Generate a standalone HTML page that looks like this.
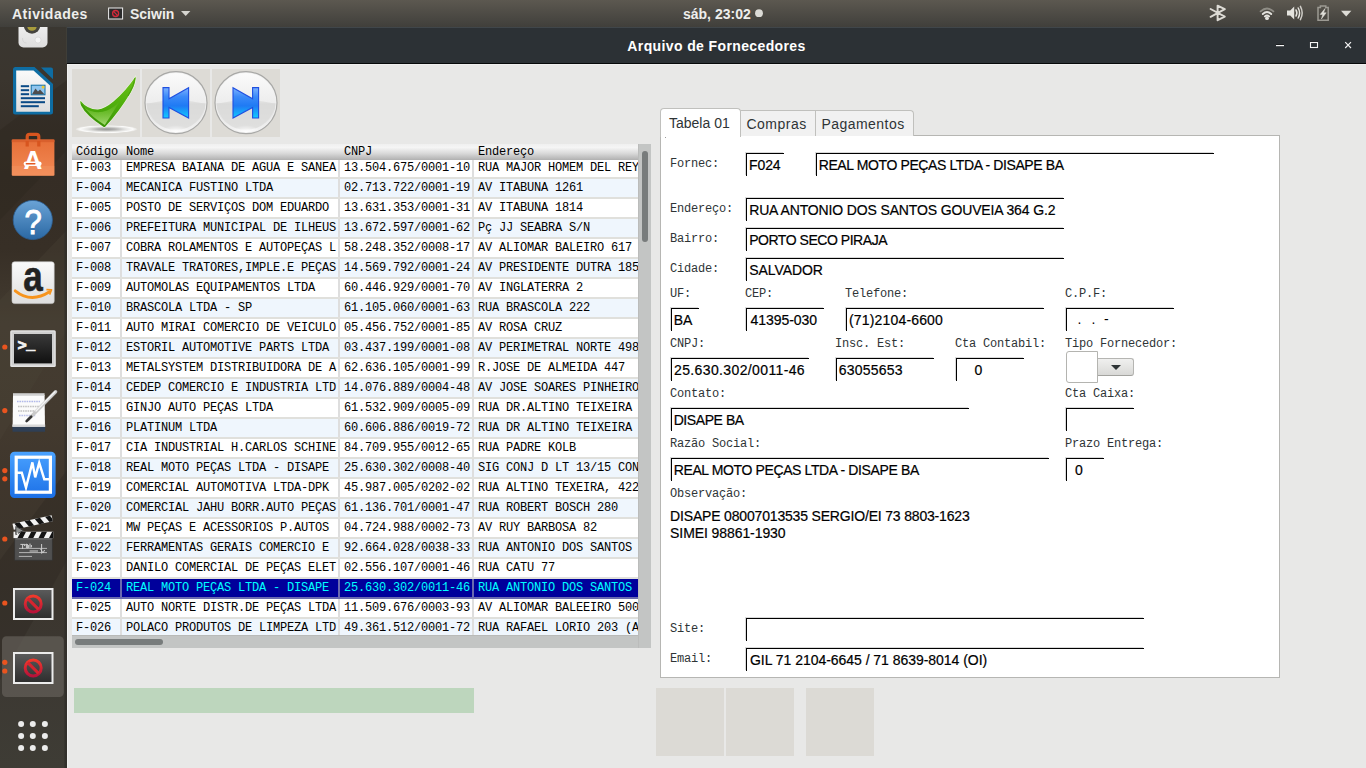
<!DOCTYPE html>
<html lang="pt-BR"><head><meta charset="utf-8"><title>Arquivo de Fornecedores</title>
<style>
*{box-sizing:border-box;margin:0;padding:0}
html,body{width:1366px;height:768px;overflow:hidden;background:#e8e8e7}
body{position:relative;font-family:"Liberation Sans",sans-serif;color:#000}
.abs{position:absolute}
/* top bar */
#topbar{position:absolute;left:0;top:0;width:1366px;height:27px;background:linear-gradient(#5c5850,#403f3b);color:#eeeeec;font-family:"Liberation Sans",sans-serif;font-weight:bold;font-size:14px}
#topbar .t{position:absolute;top:1px;line-height:27px;white-space:nowrap}
/* dock */
#dock{position:absolute;left:0;top:27px;width:67px;height:741px;background:#393630;overflow:hidden}
/* window */
#titlebar{position:absolute;left:67px;top:27px;width:1299px;height:36px;background:#2c3135;border-top:1px solid #40464a;color:#fff}
#titlebar .title{position:absolute;left:0;width:100%;top:1px;text-align:center;line-height:35px;font-weight:bold;font-size:14px;letter-spacing:.38px}
#tbline{position:absolute;left:67px;top:63px;width:1299px;height:1px;background:#07090a}
#winleft{position:absolute;left:67px;top:64px;width:1px;height:704px;background:#f1f1f0}
#wintop{position:absolute;left:67px;top:64px;width:1299px;height:1px;background:#f0f0ef}
#content{position:absolute;left:67px;top:64px;width:1299px;height:704px;background:#e8e8e7}
/* toolbar buttons */
.tb{position:absolute;top:69px;width:68px;height:68px;background:#dddbd6}
/* table */
#grid{position:absolute;left:72px;top:144px;width:579px;height:504px;background:#c3c5c4;overflow:hidden;font-family:"Liberation Mono",monospace;font-size:12px;letter-spacing:-0.2px;color:#000}
#ghead{position:absolute;left:0;top:0;width:566px;height:16px;background:linear-gradient(#f0f0f0,#f5f5f5 22%,#d8d8d8 60%,#b0b0b0);white-space:nowrap;z-index:2}
#ghead span{position:absolute;top:1px;line-height:15px}
#gbody{position:absolute;left:0;top:15px;width:566px;height:476px;border-bottom:1px solid #b9bab8;box-sizing:content-box;overflow:hidden;background:#fff}
.tr{position:relative;height:20px;border-bottom:2px solid #e0e0dc;background:#fff;white-space:nowrap;overflow:hidden}
.tr.alt{background:#eff6fd}
.tr.sel{background:#00009b;color:#00ffff;border-bottom-color:#6a6ab0}
.tr span{position:absolute;top:0;height:18px;line-height:19px;padding-left:4px;overflow:hidden;border-right:2px solid #dedede}
.tr.sel span{border-right-color:#6a6ab0}
.c1{left:0;width:50px}.c2{left:50px;width:218px}.c3{left:268px;width:134px}.c4{left:402px;width:164px;border-right:none !important}
#vtrack{position:absolute;left:566px;top:0;width:13px;height:504px;background:#c3c5c4;border-left:1px solid #bbbcbb}
#vthumb{position:absolute;left:570px;top:7px;width:6px;height:91px;border-radius:3px;background:#787c7c}
#hthumb{position:absolute;left:3px;top:495px;width:88px;height:6px;border-radius:3px;background:#787c7c}
/* green bar */
#green{position:absolute;left:74px;top:688px;width:400px;height:25px;background:#bdd6bd}
.gb{position:absolute;top:688px;width:68px;height:68px;background:#dcdad5}
/* notebook */
#panel{position:absolute;left:660px;top:135px;width:620px;height:543px;background:#fff;border:1px solid #b6b6b3}
.tab{position:absolute;font-size:14px;color:#2e3436;white-space:nowrap;background:#f1f1f1;border:1px solid #c0c0bd;border-bottom:none}
.tab span{position:absolute;white-space:nowrap}
/* form */
.lb{position:absolute;font-family:"Liberation Mono",monospace;font-size:12px;letter-spacing:-0.2px;color:#2e3436;white-space:nowrap;line-height:14px}
.in{position:absolute;height:23px;border-top:1px solid #000;border-left:1px solid #000;font-size:14px;white-space:nowrap;color:#000;box-shadow:-1px -1px 0 #d9d9d9}
.in span{position:absolute;top:3px;line-height:17px;white-space:nowrap;-webkit-text-stroke:.2px #000}
.obs{position:absolute;font-size:14px;line-height:17px;white-space:nowrap;color:#000;-webkit-text-stroke:.2px #000}

</style></head>
<body>
<div id="topbar">
 <span class="t" style="left:12px;letter-spacing:.5px">Atividades</span>
 <span class="t" style="left:130px">Sciwin</span>
 <span class="t" style="left:683px">sáb, 23:02</span>
</div>
<svg id="docksvg" class="abs" style="left:0;top:27px" width="67" height="741" viewBox="0 27 67 741">
<defs>
 <linearGradient id="dbg" x1="0" y1="0" x2="0" y2="1"><stop offset="0" stop-color="#3a3731"/><stop offset=".07" stop-color="#3a352e"/><stop offset=".2" stop-color="#352d25"/><stop offset=".3" stop-color="#372f26"/><stop offset=".4" stop-color="#443c31"/><stop offset=".52" stop-color="#433a2f"/><stop offset=".62" stop-color="#3f362c"/><stop offset=".75" stop-color="#3b352d"/><stop offset=".86" stop-color="#3c3832"/><stop offset="1" stop-color="#3e3c35"/></linearGradient>
 <linearGradient id="gWhite" x1="0" y1="0" x2="0" y2="1"><stop offset="0" stop-color="#fafafa"/><stop offset="1" stop-color="#dedede"/></linearGradient>
 <linearGradient id="gBag" x1="0" y1="0" x2="0" y2="1"><stop offset="0" stop-color="#e66f38"/><stop offset="1" stop-color="#f28a55"/></linearGradient>
 <linearGradient id="gHelp" x1="0" y1="0" x2="0" y2="1"><stop offset="0" stop-color="#6aa3d6"/><stop offset="1" stop-color="#2a68a3"/></linearGradient>
 <linearGradient id="gTerm" x1="0" y1="0" x2="0" y2="1"><stop offset="0" stop-color="#3a3a3a"/><stop offset="1" stop-color="#101010"/></linearGradient>
 <linearGradient id="gMon" x1="0" y1="0" x2="0" y2="1"><stop offset="0" stop-color="#4aa2ff"/><stop offset="1" stop-color="#1b6fe6"/></linearGradient>
 <linearGradient id="gScr" x1="0" y1="0" x2="0" y2="1"><stop offset="0" stop-color="#5a5a5a"/><stop offset="1" stop-color="#2e2e2e"/></linearGradient>
 <linearGradient id="gBan" x1="0" y1="0" x2="0" y2="1"><stop offset="0" stop-color="#f0392b"/><stop offset="1" stop-color="#b8123a"/></linearGradient>
 <g id="ban">
  <rect x="13" y="0" width="40.5" height="32" fill="#ececec"/>
  <rect x="15" y="2" width="36.5" height="28" fill="url(#gScr)"/>
  <circle cx="33.2" cy="16" r="8" fill="none" stroke="url(#gBan)" stroke-width="3"/>
  <line x1="27.8" y1="10.6" x2="38.6" y2="21.4" stroke="#d6242f" stroke-width="3"/>
 </g>
</defs>
<rect x="0" y="27" width="67" height="741" fill="url(#dbg)"/>
<path d="M0 300 L67 230 L67 330 L0 440 Z" fill="#4d4437" opacity=".3"/>
<path d="M0 130 L67 80 L67 150 L0 220 Z" fill="#2c241c" opacity=".35"/>
<path d="M0 560 L67 470 L67 560 L0 680 Z" fill="#2c261f" opacity=".35"/>
<rect x="66" y="27" width="1" height="36" fill="#3f3e38"/>
<rect x="64" y="120" width="1" height="648" fill="#2c2b27" opacity=".35"/>
<rect x="65" y="120" width="2" height="648" fill="#2b2a27" opacity=".6"/>

<!-- rhythmbox partial -->
<rect x="18.5" y="10" width="29" height="37.5" rx="5" fill="url(#gWhite)"/>
<circle cx="32" cy="25.5" r="8.2" fill="#45443f"/>
<circle cx="32" cy="26" r="4.8" fill="#a89c3c"/>
<circle cx="38" cy="40" r="3" fill="#f4f4f4" stroke="#d4d4d4" stroke-width=".6"/>
<path d="M22.5 38 Q22.5 43 26.5 43" fill="none" stroke="#d6d6d6" stroke-width="1"/>

<!-- writer -->
<g transform="translate(13,67)">
 <path d="M2.5 0 H21.5 L40 17 V45 Q40 47.5 37.5 47.5 H2.5 Q0 47.5 0 45 V2.5 Q0 0 2.5 0Z" fill="#0e6da3"/>
 <path d="M3.2 3.5 H20.5 L37 18.5 V44.8 H3.2Z" fill="url(#gWhite)"/>
 <path d="M28 .4 H38 Q40 .4 40 2.4 V12.2Z" fill="#0e6da3"/>
 <g fill="#0a4a86">
  <rect x="7.8" y="18.2" width="8.3" height="2"/><rect x="7.8" y="22.2" width="8.3" height="2"/><rect x="7.8" y="26.2" width="8.3" height="2"/>
  <rect x="7.8" y="30.2" width="24.2" height="2"/><rect x="7.8" y="34.2" width="24.2" height="2"/><rect x="7.8" y="38.2" width="18" height="2"/>
 </g>
 <rect x="18.2" y="18.2" width="13.8" height="9.6" fill="#8fc5ee" stroke="#0e6da3" stroke-width="1"/>
 <path d="M19 27.3 L22.5 21.5 L25 24.5 L27 22.5 L31.4 27.3Z" fill="#4d4d4d"/>
 <rect x="28.8" y="18.8" width="2.6" height="2.6" fill="#f1c92f"/>
</g>

<!-- software bag -->
<g>
 <path d="M27.2 141 V136.8 Q27.2 134.4 29.6 134.4 H36.4 Q38.8 134.4 38.8 136.8 V141" fill="none" stroke="#d8551f" stroke-width="3.2"/>
 <rect x="11.8" y="139.6" width="42.6" height="36.2" rx="1.2" fill="url(#gBag)"/>
 <rect x="11.8" y="139.6" width="42.6" height="2.6" fill="#d9602d"/>
 <rect x="11.8" y="166" width="42.6" height="9.8" fill="#f49a6a" opacity=".35"/>
 <path d="M27.2 141 V146.4 M38.8 141 V146.4" stroke="#d8551f" stroke-width="3.2"/>
 <text x="33" y="169" text-anchor="middle" font-family="Liberation Sans, sans-serif" font-weight="bold" font-size="26" fill="#fff">A</text>
 <rect x="23.6" y="161.4" width="18" height="4.6" rx="2.3" fill="#fff"/>
 <rect x="25.6" y="162.9" width="10" height="1.6" rx=".8" fill="#e35a22"/>
</g>

<!-- help -->
<circle cx="32.8" cy="220" r="19.6" fill="url(#gHelp)" stroke="#2c5f94" stroke-width=".8"/>
<text transform="translate(33.2 234.2) scale(.9 1)" x="0" y="0" text-anchor="middle" font-family="Liberation Sans, sans-serif" font-size="34.5" fill="#fff" stroke="#fff" stroke-width=".9">?</text>

<!-- amazon -->
<rect x="12" y="261.8" width="42.2" height="41.8" rx="2.5" fill="url(#gWhite)" stroke="#c9c9c9" stroke-width=".6"/>
<text transform="translate(32.9 290.8) scale(1 1.24)" x="0" y="0" text-anchor="middle" font-family="Liberation Sans, sans-serif" font-weight="bold" font-size="35" fill="#222" stroke="#222" stroke-width=".5">a</text>
<path d="M15.2 290.8 Q31 303.6 49.6 291.8" fill="none" stroke="#f7941d" stroke-width="2.9" stroke-linecap="round"/>
<path d="M46.4 289.6 L51.6 289.8 L49.6 294.6" fill="none" stroke="#f7941d" stroke-width="1.6" stroke-linejoin="round"/>

<!-- terminal -->
<rect x="10.2" y="330.2" width="45.6" height="36.7" rx="1.5" fill="#e4e4e4"/>
<rect x="11.6" y="331.6" width="42.8" height="33.9" fill="#cfcfcf"/>
<rect x="14" y="334" width="38" height="29.4" fill="url(#gTerm)"/>
<text x="17.4" y="350" font-family="Liberation Mono, monospace" font-weight="bold" font-size="15.5" fill="#f2f2f2" stroke="#f2f2f2" stroke-width=".8">&gt;<tspan dy="-.8" dx="-.4" font-size="15">_</tspan></text>

<!-- gedit -->
<g>
 <path d="M13 395 H44.6 L45 427 H12.6Z" fill="#fbfbfb"/>
 <path d="M12.4 426.5 H45.2 L45 431.8 H12.6Z" fill="#2f3f55"/>
 <rect x="12.4" y="424.5" width="32.8" height="2.4" fill="#d8d8d8"/>
 <rect x="13" y="393.2" width="31.6" height="2.6" fill="#d0d0d0"/>
 <g stroke-width="1.3" opacity=".5" stroke-dasharray="1.6 .8">
  <path d="M17 401.5 H40" stroke="#6a78d8"/><path d="M18 406.5 H41" stroke="#888"/><path d="M18 411 H38" stroke="#888"/><path d="M19 415.5 H36" stroke="#7a86dd"/>
 </g>
 <path d="M55.6 391.8 L28.4 419.4" stroke="#c9c9c9" stroke-width="3.4" stroke-linecap="round"/>
 <path d="M55 391.8 L36 411" stroke="#f4f4f4" stroke-width="1.4" stroke-linecap="round"/>
 <path d="M31.2 416.6 L26.6 421.2" stroke="#333" stroke-width="2.6" stroke-linecap="round"/>
</g>

<!-- system monitor -->
<rect x="10" y="451.8" width="45.6" height="46.2" rx="4.5" fill="url(#gMon)"/>
<rect x="16.2" y="457.2" width="34.2" height="35" fill="none" stroke="#fff" stroke-width="3.2"/>
<path d="M16.6 472.8 H21.8 L26 487.6 L32.4 462.4 L35.2 477.4 L39.2 462.8 L44.3 479.2 H50" fill="none" stroke="#fff" stroke-width="2.4" stroke-linejoin="miter"/>

<!-- clapper -->
<g>
 <rect x="14.7" y="538" width="37.6" height="22.2" fill="#505050" stroke="#333" stroke-width=".7"/>
 <rect x="15.4" y="538.6" width="36.2" height=".9" fill="#6c6c6c"/>
 <rect x="13.5" y="531.7" width="39.8" height="6.4" fill="#f2f2f2"/>
 <g fill="#141414"><path d="M17.5 538.1 L20.7 531.7 H26 L22.8 538.1Z"/><path d="M28 538.1 L31.2 531.7 H36.5 L33.3 538.1Z"/><path d="M38.5 538.1 L41.7 531.7 H47 L43.8 538.1Z"/><path d="M49 538.1 L52.2 531.7 H53.3 V538.1Z"/></g>
 <g transform="rotate(-12.2 13.6 527)">
  <rect x="13.2" y="523.6" width="40" height="6.2" fill="#f2f2f2"/>
  <g fill="#141414"><path d="M15 523.6 L18.2 529.8 H23.5 L20.3 523.6Z"/><path d="M25.5 523.6 L28.7 529.8 H34 L30.8 523.6Z"/><path d="M36 523.6 L39.2 529.8 H44.5 L41.3 523.6Z"/><path d="M46.5 523.6 L49.7 529.8 H53.2 V527 L51.6 523.6Z"/></g>
 </g>
 <path d="M15.8 526.4 L23.4 530.5 L15.8 534.6Z" fill="#8d8f8e" stroke="#3a3a3a" stroke-width=".9" stroke-linejoin="round"/>
 <circle cx="17.4" cy="533.2" r=".8" fill="#eee"/>
 <g stroke="#ededed" stroke-width=".8" opacity=".8" fill="none"><path d="M19 548.4 H47 M19 552.6 H47 M18.8 556.4 H32"/><path d="M20.4 544.4 H25 M22.6 544.4 V549 M24 546 L26.4 544 V548 M27.4 544 V548.4 M28.6 545 V548 M30 543.6 V547.8 M31.4 545 V547.4" stroke-width="1"/><path d="M41.6 544 V553.6 M40.6 549 L43 553 L44.6 550 M29.6 551 H38" stroke-width="1"/></g>
</g>

<!-- sciwin icons -->
<use href="#ban" y="588"/>
<rect x="2" y="636.3" width="61.8" height="60.8" rx="4.5" fill="#6a665f" opacity=".62"/>
<use href="#ban" y="652"/>

<!-- indicators -->
<g fill="#e9541f">
 <circle cx="4.8" cy="347" r="2.6"/><circle cx="4.8" cy="410.6" r="2.6"/>
 <circle cx="4.8" cy="470.6" r="2.6"/><circle cx="4.8" cy="478.8" r="2.6"/>
 <circle cx="4.8" cy="539" r="2.6"/><circle cx="4.8" cy="603" r="2.6"/>
 <circle cx="4.8" cy="662.3" r="2.6"/><circle cx="4.8" cy="671" r="2.6"/>
</g>
<!-- apps grid -->
<g fill="#ececec">
 <circle cx="21.1" cy="724" r="3"/><circle cx="32.8" cy="724" r="3"/><circle cx="44.9" cy="724" r="3"/>
 <circle cx="21.1" cy="736" r="3"/><circle cx="32.8" cy="736" r="3"/><circle cx="44.9" cy="736" r="3"/>
 <circle cx="21.1" cy="748" r="3"/><circle cx="32.8" cy="748" r="3"/><circle cx="44.9" cy="748" r="3"/>
</g>
</svg>

<div id="titlebar"><div class="title">Arquivo de Fornecedores</div></div>
<div id="tbline"></div>
<div id="content"></div>
<div id="winleft"></div><div id="wintop"></div>

<div class="tb" style="left:72px"></div>
<div class="tb" style="left:142px"></div>
<div class="tb" style="left:212px"></div>

<svg class="abs" style="left:72px;top:69px" width="208" height="68" viewBox="72 69 208 68">
<defs>
 <linearGradient id="gChk" x1="0" y1="0" x2="0" y2="1"><stop offset="0" stop-color="#6cc417"/><stop offset=".55" stop-color="#4fae0c"/><stop offset="1" stop-color="#3c9608"/></linearGradient>
 <linearGradient id="gChk2" x1="0" y1="0" x2="0" y2="1"><stop offset="0" stop-color="#9be04a" stop-opacity=".0"/><stop offset="1" stop-color="#c9f29a" stop-opacity=".9"/></linearGradient>
 <radialGradient id="gSh" cx=".5" cy=".5" r=".5"><stop offset="0" stop-color="#979796"/><stop offset=".3" stop-color="#b4b4b2"/><stop offset=".6" stop-color="#e2e2e0"/><stop offset=".85" stop-color="#fbfbfa"/><stop offset="1" stop-color="#fff" stop-opacity=".2"/></radialGradient>
 <linearGradient id="gBtn" x1="0" y1="0" x2="0" y2="1"><stop offset="0" stop-color="#fbfbfb"/><stop offset=".5" stop-color="#ededed"/><stop offset=".52" stop-color="#dcdcdc"/><stop offset="1" stop-color="#f3f3f3"/></linearGradient>
 <radialGradient id="gGlow" cx=".5" cy="1" r=".5"><stop offset="0" stop-color="#fff"/><stop offset="1" stop-color="#fff" stop-opacity="0"/></radialGradient>
 <linearGradient id="gBlue" x1="0" y1="0" x2="0" y2="1"><stop offset="0" stop-color="#7db2ff"/><stop offset=".3" stop-color="#3b8af8"/><stop offset=".6" stop-color="#1f7af4"/><stop offset="1" stop-color="#10ccff"/></linearGradient>
 <g id="rbtn">
  <circle cx="0" cy="0" r="31" fill="#f0f0f0" stroke="#a8a8a6" stroke-width="1.2"/>
  <circle cx="0" cy="0" r="29.6" fill="url(#gBtn)"/>
  <path d="M-29.4 1 Q0 -6 29.4 1 A29.6 29.6 0 0 1 -29.4 1Z" fill="#d9d9d8" opacity=".75"/>
  <ellipse cx="0" cy="22.5" rx="15" ry="7" fill="url(#gGlow)"/>
 </g>
</defs>
<!-- check -->
<ellipse cx="106.5" cy="129.2" rx="30.8" ry="4" fill="url(#gSh)"/>
<path d="M80.4 100.8 Q88 110 98 109.6 Q105 108.6 113.5 101.5 Q126 91 135.6 76.6 Q136.4 82 131 92 Q119 112 105.4 126.6 Q104.4 127.6 103 126.6 Q86 115.6 81 105.6 Q80 103 80.4 100.8Z" fill="url(#gChk)" stroke="#f4fbe9" stroke-opacity=".75" stroke-width="1.2" paint-order="stroke"/>
<path d="M84 107.5 Q95 115 107 110.5 Q113 108 120 101 L104.8 125 Q92 117 84 107.5Z" fill="url(#gChk2)" opacity=".8"/>
<path d="M81.4 104 Q88 115.4 104.6 126.4" fill="none" stroke="#3a8f08" stroke-width="1"/>
<path d="M135 78 Q134 86 128 96" fill="none" stroke="#3f930a" stroke-width="1" opacity=".7"/>
<!-- prev -->
<use href="#rbtn" x="176" y="102.7"/>
<path d="M163 87.6 H169 V98.8 L188.6 87.8 V118 L169 107.4 V118 H163Z" fill="url(#gBlue)" stroke="#1f4fe0" stroke-width="1.1" stroke-linejoin="miter"/>
<!-- next -->
<use href="#rbtn" x="246" y="102.7"/>
<path d="M258.6 87.6 H252.6 V98.8 L233 87.8 V118 L252.6 107.4 V118 H258.6Z" fill="url(#gBlue)" stroke="#1f4fe0" stroke-width="1.1" stroke-linejoin="miter"/>
</svg>

<!-- top bar icons -->
<svg class="abs" style="left:100px;top:0" width="100" height="27" viewBox="100 0 100 27">
 <rect x="108.6" y="8" width="14" height="11" fill="#2b2b2b" stroke="#ededed" stroke-width="1"/>
 <circle cx="115.6" cy="13.5" r="3" fill="none" stroke="#d32a3a" stroke-width="1.3"/>
 <path d="M113.6 11.4 L117.6 15.6" stroke="#d32a3a" stroke-width="1.2"/>
 <path d="M181 11 H190.4 L185.7 16Z" fill="#d6d5d0"/>
</svg>
<svg class="abs" style="left:750px;top:0" width="20" height="27" viewBox="750 0 20 27">
 <circle cx="759" cy="13.2" r="3.9" fill="#dcdbd6"/>
</svg>
<svg class="abs" style="left:1200px;top:0" width="166" height="63" viewBox="1200 0 166 63">
 <!-- bluetooth -->
 <g stroke="#dddbd5" stroke-width="1.95" fill="none" stroke-linejoin="round" stroke-linecap="round">
  <path d="M1210.6 9 L1224.8 16.6 L1217.6 20.2 V5.6 L1224.8 9.2 L1210.6 16.8"/>
 </g>
 <!-- wifi -->
 <g fill="none" stroke-linecap="round">
  <path d="M1260.6 11.4 Q1267 5.6 1273.4 11.4" stroke="#8f8d86" stroke-width="1.8"/>
  <path d="M1262.8 14 Q1267 10.2 1271.2 14" stroke="#e4e3de" stroke-width="1.9"/>
  <path d="M1264.8 16.4 Q1267 14.6 1269.2 16.4" stroke="#e4e3de" stroke-width="1.8"/>
 </g>
 <circle cx="1267" cy="18.2" r="1.9" fill="#e4e3de"/>
 <!-- volume -->
 <path d="M1287 10.4 H1290.2 L1294.2 6.4 V19.6 L1290.2 15.6 H1287Z" fill="#e4e3de"/>
 <g fill="none" stroke="#e4e3de" stroke-width="1.5" stroke-linecap="round">
  <path d="M1296 10 Q1297.8 13 1296 16"/><path d="M1298.2 8 Q1301 13 1298.2 18"/><path d="M1300.4 6.4 Q1304 13 1300.4 19.6" stroke="#cfcdc7"/>
 </g>
 <!-- battery -->
 <path d="M1318 7.6 H1320.4 V6 H1325.8 V7.6 H1328.2 V20.2 H1318Z" fill="none" stroke="#9c9a93" stroke-width="1.5"/>
 <path d="M1325 8.6 L1320.2 14.4 H1322.8 L1321.4 19 L1326.2 12.8 H1323.6Z" fill="#e0dfd9" stroke="#e0dfd9" stroke-width=".5"/>
 <!-- menu arrow -->
 <path d="M1341 10.8 H1351.4 L1346.2 16.4Z" fill="#dddcd6"/>
 <!-- window controls -->
 <rect x="1276" y="44" width="8" height="1" fill="#111" opacity=".6"/>
 <rect x="1276" y="45" width="8" height="1.2" fill="#f4f4f4"/>
 <rect x="1310" y="41" width="8" height="1" fill="#111" opacity=".6"/>
 <rect x="1310.5" y="42.5" width="7" height="5" fill="none" stroke="#f4f4f4" stroke-width="1.1"/>
 <path d="M1345.2 42.2 L1351 48 M1351 42.2 L1345.2 48" stroke="#f4f4f4" stroke-width="1.15"/>
</svg>

<div id="grid">
 <div id="ghead"><span style="left:4px">Código</span><span style="left:54px">Nome</span><span style="left:272px">CNPJ</span><span style="left:406px">Endereço</span></div>
 <div id="gbody">
<div class="tr "><span class="c1">F-003</span><span class="c2">EMPRESA BAIANA DE AGUA E SANEA</span><span class="c3">13.504.675/0001-10</span><span class="c4">RUA MAJOR HOMEM DEL REY</span></div>
<div class="tr alt"><span class="c1">F-004</span><span class="c2">MECANICA FUSTINO LTDA</span><span class="c3">02.713.722/0001-19</span><span class="c4">AV ITABUNA 1261</span></div>
<div class="tr "><span class="c1">F-005</span><span class="c2">POSTO DE SERVIÇOS DOM EDUARDO</span><span class="c3">13.631.353/0001-31</span><span class="c4">AV ITABUNA 1814</span></div>
<div class="tr alt"><span class="c1">F-006</span><span class="c2">PREFEITURA MUNICIPAL DE ILHEUS</span><span class="c3">13.672.597/0001-62</span><span class="c4">Pç JJ SEABRA S/N</span></div>
<div class="tr "><span class="c1">F-007</span><span class="c2">COBRA ROLAMENTOS E AUTOPEÇAS L</span><span class="c3">58.248.352/0008-17</span><span class="c4">AV ALIOMAR BALEIRO 617</span></div>
<div class="tr alt"><span class="c1">F-008</span><span class="c2">TRAVALE TRATORES,IMPLE.E PEÇAS</span><span class="c3">14.569.792/0001-24</span><span class="c4">AV PRESIDENTE DUTRA 185</span></div>
<div class="tr "><span class="c1">F-009</span><span class="c2">AUTOMOLAS EQUIPAMENTOS LTDA</span><span class="c3">60.446.929/0001-70</span><span class="c4">AV INGLATERRA 2</span></div>
<div class="tr alt"><span class="c1">F-010</span><span class="c2">BRASCOLA LTDA - SP</span><span class="c3">61.105.060/0001-63</span><span class="c4">RUA BRASCOLA 222</span></div>
<div class="tr "><span class="c1">F-011</span><span class="c2">AUTO MIRAI COMERCIO DE VEICULO</span><span class="c3">05.456.752/0001-85</span><span class="c4">AV ROSA CRUZ</span></div>
<div class="tr alt"><span class="c1">F-012</span><span class="c2">ESTORIL AUTOMOTIVE PARTS LTDA</span><span class="c3">03.437.199/0001-08</span><span class="c4">AV PERIMETRAL NORTE 498</span></div>
<div class="tr "><span class="c1">F-013</span><span class="c2">METALSYSTEM DISTRIBUIDORA DE A</span><span class="c3">62.636.105/0001-99</span><span class="c4">R.JOSE DE ALMEIDA 447</span></div>
<div class="tr alt"><span class="c1">F-014</span><span class="c2">CEDEP COMERCIO E INDUSTRIA LTD</span><span class="c3">14.076.889/0004-48</span><span class="c4">AV JOSE SOARES PINHEIRO</span></div>
<div class="tr "><span class="c1">F-015</span><span class="c2">GINJO AUTO PEÇAS LTDA</span><span class="c3">61.532.909/0005-09</span><span class="c4">RUA DR.ALTINO TEIXEIRA</span></div>
<div class="tr alt"><span class="c1">F-016</span><span class="c2">PLATINUM LTDA</span><span class="c3">60.606.886/0019-72</span><span class="c4">RUA DR ALTINO TEIXEIRA</span></div>
<div class="tr "><span class="c1">F-017</span><span class="c2">CIA INDUSTRIAL H.CARLOS SCHINE</span><span class="c3">84.709.955/0012-65</span><span class="c4">RUA PADRE KOLB</span></div>
<div class="tr alt"><span class="c1">F-018</span><span class="c2">REAL MOTO PEÇAS LTDA - DISAPE</span><span class="c3">25.630.302/0008-40</span><span class="c4">SIG CONJ D LT 13/15 CON</span></div>
<div class="tr "><span class="c1">F-019</span><span class="c2">COMERCIAL AUTOMOTIVA LTDA-DPK</span><span class="c3">45.987.005/0202-02</span><span class="c4">RUA ALTINO TEXEIRA, 422</span></div>
<div class="tr alt"><span class="c1">F-020</span><span class="c2">COMERCIAL JAHU BORR.AUTO PEÇAS</span><span class="c3">61.136.701/0001-47</span><span class="c4">RUA ROBERT BOSCH 280</span></div>
<div class="tr "><span class="c1">F-021</span><span class="c2">MW PEÇAS E ACESSORIOS P.AUTOS</span><span class="c3">04.724.988/0002-73</span><span class="c4">AV RUY BARBOSA 82</span></div>
<div class="tr alt"><span class="c1">F-022</span><span class="c2">FERRAMENTAS GERAIS COMERCIO E</span><span class="c3">92.664.028/0038-33</span><span class="c4">RUA ANTONIO DOS SANTOS</span></div>
<div class="tr "><span class="c1">F-023</span><span class="c2">DANILO COMERCIAL DE PEÇAS ELET</span><span class="c3">02.556.107/0001-46</span><span class="c4">RUA CATU 77</span></div>
<div class="tr sel"><span class="c1">F-024</span><span class="c2">REAL MOTO PEÇAS LTDA - DISAPE</span><span class="c3">25.630.302/0011-46</span><span class="c4">RUA ANTONIO DOS SANTOS</span></div>
<div class="tr "><span class="c1">F-025</span><span class="c2">AUTO NORTE DISTR.DE PEÇAS LTDA</span><span class="c3">11.509.676/0003-93</span><span class="c4">AV ALIOMAR BALEEIRO 500</span></div>
<div class="tr alt"><span class="c1">F-026</span><span class="c2">POLACO PRODUTOS DE LIMPEZA LTD</span><span class="c3">49.361.512/0001-72</span><span class="c4">RUA RAFAEL LORIO 203 (A</span></div>
 </div>
 <div id="vtrack"></div><div id="vthumb"></div><div id="hthumb"></div>
</div>

<div id="green"></div>
<div class="gb" style="left:656px"></div>
<div class="gb" style="left:726px"></div>
<div class="gb" style="left:806px"></div>

<div id="panel"></div>
<div class="tab" style="left:815px;top:110px;width:99px;height:26px;border-radius:0 4px 0 0"><span style="left:5.5px;top:5px;letter-spacing:.45px">Pagamentos</span></div>
<div class="tab" style="left:740px;top:110px;width:76px;height:26px"><span style="left:5.5px;top:5px;letter-spacing:.48px">Compras</span></div>
<div class="tab" style="left:660px;top:108px;width:81px;height:29px;background:#fff;border-radius:4px 4px 0 0"><span style="left:8px;top:6px;letter-spacing:0">Tabela 01</span></div>

<div class="abs" id="speck" style="left:665px;top:137px;width:1px;height:1px;background:#9a9a9a"></div>
<div class="lb" style="left:670px;top:157px">Fornec:</div>
<div class="lb" style="left:670px;top:202px">Endereço:</div>
<div class="lb" style="left:670px;top:232px">Bairro:</div>
<div class="lb" style="left:670px;top:262px">Cidade:</div>
<div class="lb" style="left:670px;top:287px">UF:</div>
<div class="lb" style="left:745px;top:287px">CEP:</div>
<div class="lb" style="left:845px;top:287px">Telefone:</div>
<div class="lb" style="left:1065px;top:287px">C.P.F:</div>
<div class="lb" style="left:670px;top:337px">CNPJ:</div>
<div class="lb" style="left:835px;top:337px">Insc. Est:</div>
<div class="lb" style="left:955px;top:337px">Cta Contabil:</div>
<div class="lb" style="left:1065px;top:337px">Tipo Fornecedor:</div>
<div class="lb" style="left:670px;top:387px">Contato:</div>
<div class="lb" style="left:1065px;top:387px">Cta Caixa:</div>
<div class="lb" style="left:670px;top:437px">Razão Social:</div>
<div class="lb" style="left:1065px;top:437px">Prazo Entrega:</div>
<div class="lb" style="left:670px;top:487px">Observação:</div>
<div class="lb" style="left:670px;top:622px">Site:</div>
<div class="lb" style="left:670px;top:652px">Email:</div>
<div class="in" style="left:746px;top:153px;width:38px"><span id="i_cod" style="left:2.12px;letter-spacing:-0.120px">F024</span></div>
<div class="in" style="left:816px;top:153px;width:398px"><span id="i_nome" style="left:1.70px;letter-spacing:-0.383px">REAL MOTO PEÇAS LTDA - DISAPE BA</span></div>
<div class="in" style="left:746px;top:198px;width:318px"><span id="i_end" style="left:2.16px;letter-spacing:-0.141px">RUA ANTONIO DOS SANTOS GOUVEIA 364 G.2</span></div>
<div class="in" style="left:746px;top:228px;width:318px"><span id="i_bai" style="left:2.16px;letter-spacing:-0.461px">PORTO SECO PIRAJA</span></div>
<div class="in" style="left:746px;top:258px;width:318px"><span id="i_cid" style="left:2.16px;letter-spacing:-0.051px">SALVADOR</span></div>
<div class="in" style="left:671px;top:308px;width:28px"><span id="i_uf" style="left:1.74px;letter-spacing:-0.180px">BA</span></div>
<div class="in" style="left:746px;top:308px;width:78px"><span id="i_cep" style="left:3.46px;letter-spacing:-0.045px">41395-030</span></div>
<div class="in" style="left:846px;top:308px;width:198px"><span id="i_tel" style="left:2.04px;letter-spacing:0.165px">(71)2104-6600</span></div>
<div class="in" style="left:671px;top:358px;width:138px"><span id="i_cnpj" style="left:2.04px;letter-spacing:0.371px">25.630.302/0011-46</span></div>
<div class="in" style="left:836px;top:358px;width:98px"><span id="i_insc" style="left:1.66px;letter-spacing:0.231px">63055653</span></div>
<div class="in" style="left:956px;top:358px;width:68px"><span id="i_cta" style="left:17.50px;letter-spacing:0.000px">0</span></div>
<div class="in" style="left:671px;top:408px;width:298px"><span id="i_cont" style="left:1.70px;letter-spacing:-0.428px">DISAPE BA</span></div>
<div class="in" style="left:671px;top:458px;width:378px"><span id="i_raz" style="left:1.70px;letter-spacing:-0.377px">REAL MOTO PEÇAS LTDA - DISAPE BA</span></div>
<div class="in" style="left:1066px;top:458px;width:38px"><span id="i_prazo" style="left:8.04px;letter-spacing:0.000px">0</span></div>
<div class="in" style="left:746px;top:648px;width:398px"><span id="i_email" style="left:3.00px;letter-spacing:-0.036px">GIL 71 2104-6645 / 71 8639-8014 (OI)</span></div>
<div class="in" style="left:1066px;top:308px;width:108px"></div>
<div class="in" style="left:1066px;top:408px;width:68px"></div>
<div class="in" style="left:746px;top:618px;width:398px"></div>
<div class="obs" id="o_1" style="left:670.12px;top:508px;letter-spacing:-0.176px">DISAPE 08007013535 SERGIO/EI 73 8803-1623</div>
<div class="obs" id="o_2" style="left:670.12px;top:525px;letter-spacing:-0.084px">SIMEI 98861-1930</div>
<div class="abs" style="left:1098px;top:358px;width:36px;height:18px;border:1px solid #b5b5b2;border-bottom-color:#a3a39f;border-left:none;border-radius:0 3px 3px 0;background:linear-gradient(#f0f0ef,#d9d9d7)"></div>
<div class="abs" style="left:1066px;top:351px;width:32px;height:32px;border:1px solid #b4b4b0;border-radius:3px 0 0 3px;background:#fff"></div>
<div class="abs" style="left:1111px;top:365px;width:0;height:0;border-left:5px solid transparent;border-right:5px solid transparent;border-top:5px solid #2e3436"></div>
<div class="abs" style="left:1077.6px;top:311px;font-size:14px;line-height:17px">.</div>
<div class="abs" style="left:1091.4px;top:311px;font-size:14px;line-height:17px">.</div>
<div class="abs" style="left:1104px;top:311px;font-size:14px;line-height:17px">-</div>

</body></html>
